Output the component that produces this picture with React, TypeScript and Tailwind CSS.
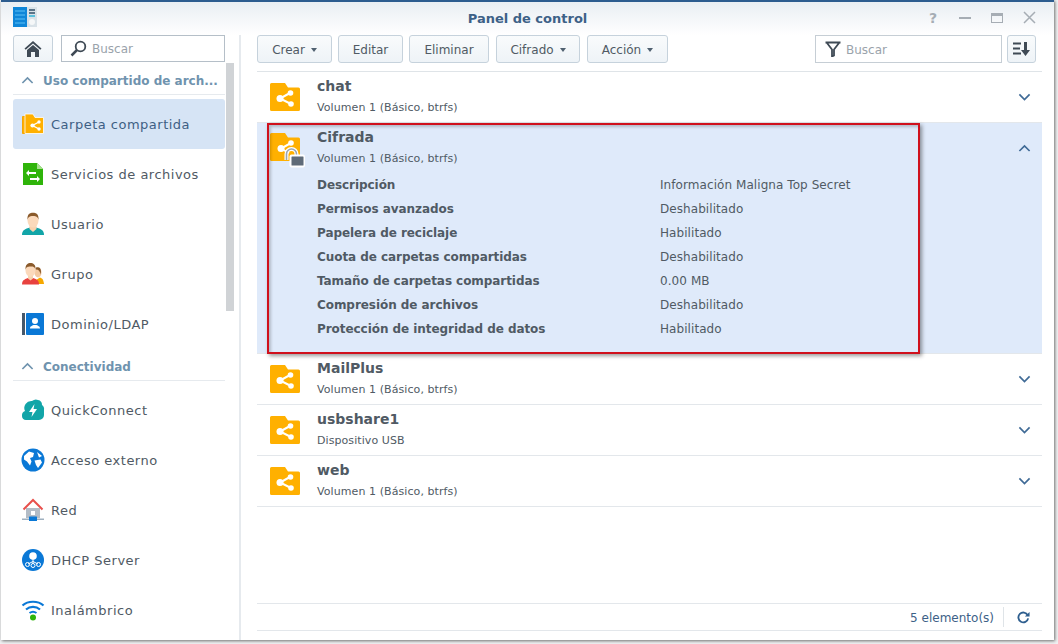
import React from "react";

const Caret = () => <span className="ml-[6px] inline-block w-0 h-0 border-x-[3.5px] border-x-transparent border-t-[4px] border-t-[#506070]" />;

const folderPath = "M0 1.500A1.500 1.500 0 0 1 1.500 0H15l3 4.500h10.500A1.500 1.500 0 0 1 30 6v20.500a1.500 1.500 0 0 1-1.500 1.500h-27A1.500 1.500 0 0 1 0 26.500z";

function Folder() {
  return (
    <svg width="30" height="28" viewBox="0 0 30 28" className="block shrink-0">
      <path d={folderPath} fill="#ffb000" />
      <path d="M20 10 L10 15.500 L21 21" stroke="#fff" strokeWidth="2" fill="none" />
      <circle cx="20.500" cy="10" r="2.800" fill="#fff" />
      <circle cx="10" cy="15.500" r="3.500" fill="#fff" />
      <circle cx="21" cy="21" r="2.800" fill="#fff" />
    </svg>
  );
}

function LockedFolder() {
  return (
    <svg width="36" height="36" viewBox="0 0 36 36" className="block shrink-0">
      <path d={folderPath} fill="#ffb000" />
      <path d="M21 10 L11 15.500 L19 20" stroke="#fff" strokeWidth="2" fill="none" />
      <circle cx="21" cy="10" r="2.800" fill="#fff" />
      <circle cx="11" cy="15.500" r="3.500" fill="#fff" />
      <path d="M16.500 27v-6a5 5 0 0 1 10 0v6" fill="none" stroke="#fff" strokeWidth="4" />
      <path d="M16.500 27v-6a5 5 0 0 1 10 0v6" fill="none" stroke="#9aa5b1" strokeWidth="1.600" />
      <rect x="19.500" y="21.500" width="15.500" height="13" rx="2" fill="#fff" />
      <rect x="21.500" y="23.500" width="12" height="9" rx="0.500" fill="#5f6b78" />
    </svg>
  );
}

const Chevron = ({ up = false, color = "#3f6a96", size = 13 }: { up?: boolean; color?: string; size?: number }) => (
  <svg width={size} height={size * 0.65} viewBox="0 0 14 9" className="block">
    <path d={up ? "M1.500 7.500 L7 2 L12.500 7.500" : "M1.500 1.500 L7 7 L12.500 1.500"} fill="none" stroke={color} strokeWidth="1.800" />
  </svg>
);

const icons: Record<string, React.ReactNode> = {
  carpeta: (
    <svg width="24" height="24" viewBox="0 0 24 24">
      <path d="M1.500 4.500h3v17h-3z" fill="#ffb000" stroke="#f6a500" />
      <path d="M4 2h8l2 3.500h8.500v16H4z" fill="#ffb000" stroke="#fff" strokeWidth="0.800" />
      <path d="M18 10 L11.500 13.500 L18 17" stroke="#fff" strokeWidth="1.400" fill="none" />
      <circle cx="18" cy="10" r="1.700" fill="#fff" />
      <circle cx="11.500" cy="13.500" r="2.100" fill="#fff" />
      <circle cx="18" cy="17" r="1.700" fill="#fff" />
    </svg>
  ),
  servicios: (
    <svg width="24" height="24" viewBox="0 0 24 24">
      <path d="M2 1h14l6 6v16H2z" fill="#2fb40a" />
      <path d="M16 1l6 6h-6z" fill="#a6e08e" />
      <path d="M5 11l3-3v2h7v2H8v2zM19 17l-3 3v-2H9v-2h7v-2z" fill="#fff" />
    </svg>
  ),
  usuario: (
    <svg width="24" height="24" viewBox="0 0 24 24">
      <path d="M1 23c0-5 3-6 8-7.500h6c5 1.500 8 2.500 8 7.500z" fill="#12a5a8" />
      <path d="M8.500 13h7v4l-3.500 3-3.500-3z" fill="#f8d2ae" />
      <ellipse cx="12" cy="8.500" rx="5.500" ry="7" fill="#fbd9bb" />
      <path d="M6.500 8C6 2 9 0.800 12 0.800S18 2 17.500 8c-.5-3-2-4-5.500-4S7 5 6.500 8z" fill="#8a5a2b" />
    </svg>
  ),
  grupo: (
    <svg width="24" height="24" viewBox="0 0 24 24">
      <ellipse cx="17" cy="10.500" rx="3.500" ry="5" fill="#f3c9a2" />
      <path d="M15 5.500c3-1 5 .5 5 4l-.5 3c-.5-3-1.500-5-4.500-5z" fill="#8a5a2b" />
      <path d="M15 18l4-2.500c3 1 3.500 3 4 6.500h-7z" fill="#f6a800" />
      <path d="M1 22.500c0-4 2-5 6-6.500h5c4 1.500 6 2.500 6 6.500z" fill="#e8423f" />
      <path d="M7 12h5v4.500l-2.500 2-2.500-2z" fill="#f8d2ae" />
      <ellipse cx="9.500" cy="8.500" rx="5" ry="6.500" fill="#fbd9bb" />
      <path d="M4.500 8C4 2.500 7 1 9.500 1s5.500 1.500 5 7c-.5-3-2-3.500-5-3.500S5 5 4.500 8z" fill="#8a5a2b" />
    </svg>
  ),
  dominio: (
    <svg width="24" height="24" viewBox="0 0 24 24">
      <rect x="1" y="1" width="3" height="22" fill="#46586a" />
      <rect x="5" y="1" width="18" height="22" rx="1" fill="#0a78d6" />
      <circle cx="14" cy="9" r="3" fill="#fff" />
      <path d="M9 16.500c0-2.500 2-2.500 3.500-3.500h3c1.500 1 3.500 1 3.500 3.500z" fill="#fff" />
    </svg>
  ),
  quick: (
    <svg width="24" height="24" viewBox="0 0 24 24">
      <path d="M5 22a4 4 0 0 1-4-4.500A4.500 4.500 0 0 1 4 13 7 7 0 0 1 11 3c2-1.500 4-2 6-1a5 5 0 0 1 4 5 5 5 0 0 1 2 5v5a5 5 0 0 1-5 5z" fill="#12a5a8" />
      <path d="M13.500 6L8 14h3.500l-1 5 5.500-8h-3.500z" fill="#fff" />
    </svg>
  ),
  acceso: (
    <svg width="24" height="24" viewBox="0 0 24 24">
      <circle cx="12" cy="12" r="11.500" fill="#0a78d6" />
      <path d="M3 8l5-4.500 5 1.500-1 4-3 1 1.500 3.500-1.500 4-3-4-3-2zM13.500 12.500l6-1 1.500 3-4 5.500-2-3zM16 4l5 4-3 1.500z" fill="#fff" />
    </svg>
  ),
  red: (
    <svg width="24" height="24" viewBox="0 0 24 24">
      <path d="M5 10h14v10H5z" fill="#b3bcc6" />
      <path d="M10 13h4v4h-4z" fill="#fff" />
      <path d="M2.500 11.500L12 2l9.500 9.500" fill="none" stroke="#e8504c" strokeWidth="2" />
      <rect x="1" y="20.500" width="22" height="1.500" fill="#9fb0bf" />
      <rect x="8" y="18.500" width="8" height="4.500" rx="0.500" fill="#0a78d6" />
    </svg>
  ),
  dhcp: (
    <svg width="24" height="24" viewBox="0 0 24 24">
      <circle cx="12" cy="12" r="11" fill="#0a78d6" />
      <circle cx="12" cy="8" r="3.800" fill="#fff" />
      <path d="M12 11v5M12 13.500L7 16M12 13.500l5 2.500" stroke="#fff" strokeWidth="1" />
      <circle cx="6.500" cy="16.500" r="2" fill="none" stroke="#fff" strokeWidth="1" />
      <circle cx="12" cy="17.500" r="2" fill="none" stroke="#fff" strokeWidth="1" />
      <circle cx="17.500" cy="16.500" r="2" fill="none" stroke="#fff" strokeWidth="1" />
    </svg>
  ),
  wifi: (
    <svg width="24" height="24" viewBox="0 0 24 24">
      <path d="M1.500 7.500C7 2.500 17 2.500 22.500 7.500" fill="none" stroke="#0a78d6" strokeWidth="2.200" />
      <path d="M5 11.500c4-3.500 10-3.500 14 0" fill="none" stroke="#0a78d6" strokeWidth="2.200" />
      <path d="M8.500 15c2-1.500 5-1.500 7 0" fill="none" stroke="#0a78d6" strokeWidth="2" />
      <circle cx="12" cy="19.500" r="3" fill="#2fb40a" />
    </svg>
  ),
};

function NavItem({ icon, label, active = false }: { icon: string; label: string; active?: boolean }) {
  return (
    <div className={`h-[50px] flex items-center pl-[8px] gap-[6px] rounded-[3px] text-[13px] tracking-[0.5px] ${active ? "bg-[#d6e4f5] text-[#3e5f84]" : "text-[#505a64]"}`}>
      <span className="w-[24px] h-[24px] flex items-center justify-center shrink-0">{icons[icon]}</span>
      <span className="pt-[2px]">{label}</span>
    </div>
  );
}

function Section({ label }: { label: string }) {
  return (
    <div className="h-[32px] mb-[4px] pt-[4px] flex items-center gap-[9px] pl-[8px] border-b border-[#e6eaee] font-bold text-[#6f93ae] text-[12px]">
      <Chevron up color="#6f93ae" />
      <span>{label}</span>
    </div>
  );
}

function ToolBtn({ label, caret = false, w }: { label: string; caret?: boolean; w: string }) {
  return (
    <button className={`h-[28px] ${w} pt-[1px] flex items-center justify-center rounded-[3px] border border-[#c6d2dc] bg-gradient-to-b from-[#f9fbfc] to-[#eef3f7] text-[12px] text-[#505a64]`}>
      {label}
      {caret && <Caret />}
    </button>
  );
}

function Row({ name, sub }: { name: string; sub: string }) {
  return (
    <div className="h-[51px] flex items-center border-b border-[#e3e7eb] pl-[13px] pr-[11px]">
      <span className="w-[47px]"><Folder /></span>
      <div className="flex-1 self-start pt-[5px]">
        <div className="text-[14px] font-bold text-[#505a64] leading-[18px]">{name}</div>
        <div className="text-[11px] tracking-[0.08px] text-[#505a64] leading-[14px] mt-[6px]">{sub}</div>
      </div>
      <span className="mt-[1px]"><Chevron /></span>
    </div>
  );
}

const details = [
  ["Descripción", "Información Maligna Top Secret"],
  ["Permisos avanzados", "Deshabilitado"],
  ["Papelera de reciclaje", "Habilitado"],
  ["Cuota de carpetas compartidas", "Deshabilitado"],
  ["Tamaño de carpetas compartidas", "0.00 MB"],
  ["Compresión de archivos", "Deshabilitado"],
  ["Protección de integridad de datos", "Habilitado"],
];

export default function App() {
  return (
    <div className="w-[1058px] h-[644px] bg-[#f0f1f2] overflow-hidden relative" style={{ fontFamily: '"DejaVu Sans", Verdana, sans-serif' }}>
      <div className="ml-[1px] w-[1053px] h-[640px] bg-white border-t-[2px] border-[#2c5c8f] flex flex-col shadow-[1px_1px_3px_rgba(0,0,0,0.55)]">
        <div className="h-[33px] shrink-0 flex items-center bg-gradient-to-b from-[#e9eef3] to-white relative">
          <div className="ml-[12px] flex w-[24px] h-[20px] -mt-[4px]">
            <svg width="24" height="20" viewBox="0 0 24 20">
              <rect width="14" height="20" fill="#0f86d8" />
              <path d="M2 4h10M2 8h10M2 12h10M2 16h10" stroke="#5cc0f5" strokeWidth="1" />
              <rect x="14" width="10" height="20" fill="#d9e2e8" />
              <path d="M16 3h6M16 6h6" stroke="#30506a" strokeWidth="1.500" />
              <path d="M16 9h6" stroke="#2fb4d8" strokeWidth="1.500" />
              <circle cx="19" cy="15" r="3" fill="#f5f7f8" />
            </svg>
          </div>
          <div className="absolute left-0 right-0 text-center text-[13px] font-bold text-[#3d6187]">Panel de control</div>
          <div className="ml-auto mr-[18px] -mt-[2px] flex items-center gap-[20px] relative">
            <span className="text-[14px] leading-none font-bold text-[#a6adb4] w-[12px] text-center">?</span>
            <span className="w-[12px] h-[2px] bg-[#a6adb4]" />
            <span className="w-[12px] h-[10px] border border-t-[3px] border-[#a6adb4]" />
            <svg width="13" height="13" viewBox="0 0 13 13"><path d="M1 1l11 11M12 1L1 12" stroke="#a6adb4" strokeWidth="1.500" /></svg>
          </div>
        </div>

        <div className="flex-1 flex min-h-0">
          <aside className="w-[240px] shrink-0 border-r-[2px] border-[#e6eaee] pl-[12px] flex flex-col overflow-hidden">
            <div className="flex h-[28px] shrink-0 gap-[8px] w-[212px]">
              <button className="w-[40px] h-[27px] flex items-center justify-center rounded-[3px] border border-[#c6d2dc] bg-gradient-to-b from-[#f9fbfc] to-[#eef3f7]">
                <svg width="18" height="17" viewBox="0 0 18 17"><path d="M9 1L0.500 8.500l1.200 1.200L9 3.500l7.300 6.200 1.200-1.200z" fill="#3f4a55" /><path d="M3 10l6-5 6 5v7h-4v-5H7v5H3z" fill="#3f4a55" /></svg>
              </button>
              <div className="flex-1 h-[27px] border border-[#b5bfc8] flex items-center pl-[8px] gap-[5px] text-[12px] text-[#9aa3ab]">
                <svg width="17" height="17" viewBox="0 0 17 17"><circle cx="10.500" cy="6.500" r="4.800" fill="none" stroke="#3f4a55" strokeWidth="1.800" /><path d="M7 10l-5.500 5.500" stroke="#3f4a55" strokeWidth="2.500" /></svg>
                <span>Buscar</span>
              </div>
            </div>
            <div className="flex flex-1 min-h-0">
              <div className="w-[212px] shrink-0">
                <Section label="Uso compartido de arch..." />
                <NavItem icon="carpeta" label="Carpeta compartida" active />
                <NavItem icon="servicios" label="Servicios de archivos" />
                <NavItem icon="usuario" label="Usuario" />
                <NavItem icon="grupo" label="Grupo" />
                <NavItem icon="dominio" label="Dominio/LDAP" />
                <Section label="Conectividad" />
                <NavItem icon="quick" label="QuickConnect" />
                <NavItem icon="acceso" label="Acceso externo" />
                <NavItem icon="red" label="Red" />
                <NavItem icon="dhcp" label="DHCP Server" />
                <NavItem icon="wifi" label="Inalámbrico" />
              </div>
              <div className="ml-[1px] w-[8px] h-[248px] bg-[#d0d3d6]" />
            </div>
          </aside>

          <main className="flex-1 min-w-0 pl-[16px] pr-[12px] flex flex-col">
            <div className="h-[37px] shrink-0 border-b border-[#dfe4e8] flex gap-[6px] items-start">
              <ToolBtn label="Crear" caret w="w-[75px]" />
              <ToolBtn label="Editar" w="w-[65px]" />
              <ToolBtn label="Eliminar" w="w-[80px]" />
              <ToolBtn label="Cifrado" caret w="w-[84px] ml-[1px]" />
              <ToolBtn label="Acción" caret w="w-[81px] ml-[1px]" />
              <div className="ml-auto w-[187px] h-[28px] border border-[#c6ced5] flex items-center pl-[9px] gap-[5px] text-[12px] text-[#9aa3ab]">
                <svg width="16" height="16" viewBox="0 0 16 16"><path d="M0.500 1.500h15M2 2l5 6.500v7l2-1V8.500L14 2" fill="none" stroke="#3f4a55" strokeWidth="1.800" /></svg>
                <span className="pt-[1px]">Buscar</span>
              </div>
              <button className="w-[29px] h-[28px] -ml-[1px] mr-[6px] flex items-center justify-center rounded-[3px] border border-[#c6d2dc] bg-gradient-to-b from-[#f9fbfc] to-[#eef3f7]">
                <svg width="18" height="14" viewBox="0 0 18 14"><path d="M0 1.500h8M0 6.500h7M0 11.500h8" stroke="#3f4a55" strokeWidth="1.800" /><path d="M11 0h3v8h3l-4.500 6L8 8h3z" fill="#3f4a55" /></svg>
              </button>
            </div>

            <div className="flex-1 min-h-0 relative">
              <Row name="chat" sub="Volumen 1 (Básico, btrfs)" />
              <div className="h-[231px] bg-[#dfeafa] border-b border-[#e3e7eb] pl-[13px] pr-[11px] relative">
                <div className="flex pt-[5px]">
                  <span className="w-[47px] pt-[5px]"><LockedFolder /></span>
                  <div className="flex-1">
                    <div className="text-[14px] font-bold text-[#505a64] leading-[18px]">Cifrada</div>
                    <div className="text-[11px] tracking-[0.08px] text-[#505a64] leading-[14px] mt-[6px]">Volumen 1 (Básico, btrfs)</div>
                  </div>
                  <span className="pt-[16px]"><Chevron up /></span>
                </div>
                <div className="pl-[47px] mt-[4px]">
                  {details.map(([k, v]) => (
                    <div key={k} className="h-[24px] flex items-center text-[12px] text-[#505a64]">
                      <span className="w-[343px] font-bold tracking-[-0.06px]">{k}</span>
                      <span className="tracking-[0.07px]">{v}</span>
                    </div>
                  ))}
                </div>
              </div>
              <Row name="MailPlus" sub="Volumen 1 (Básico, btrfs)" />
              <Row name="usbshare1" sub="Dispositivo USB" />
              <Row name="web" sub="Volumen 1 (Básico, btrfs)" />
              <div className="absolute left-[10px] top-[51px] w-[653px] h-[231px] border-[2px] border-[#d0101c] shadow-[2px_2px_4px_rgba(0,0,0,0.4),inset_2px_2px_3px_rgba(0,0,0,0.2)]" />
            </div>

            <div className="h-[28px] shrink-0 border-y border-[#e3e7eb] flex items-center justify-end text-[12px] text-[#3d6187] mb-[9px]">
              <span className="pt-[1px]">5 elemento(s)</span>
              <span className="w-px h-[20px] bg-[#dfe4e8] ml-[9px]" />
              <svg className="ml-[13px] mr-[12px]" width="13" height="13" viewBox="0 0 14 14"><path d="M11.500 4.500A5.300 5.300 0 1 0 12 8" fill="none" stroke="#2f5f8f" strokeWidth="2" /><path d="M13.500 1v5h-5z" fill="#2f5f8f" /></svg>
            </div>
          </main>
        </div>
      </div>
    </div>
  );
}
